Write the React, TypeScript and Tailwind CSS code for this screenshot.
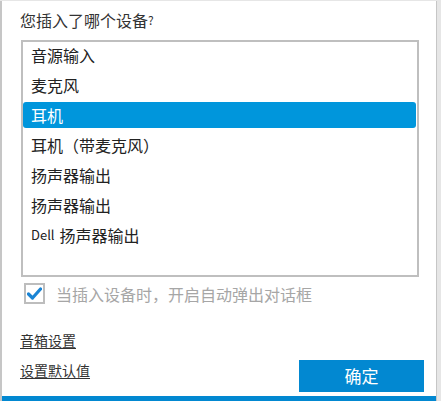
const devices = [
  "音源输入",
  "麦克风",
  "耳机",
  "耳机（带麦克风）",
  "扬声器输出",
  "扬声器输出",
  "Dell 扬声器输出",
];

export default function App() {
  const selected = 2;

  return (
    <div
      className="flex h-[401px] w-[441px] bg-[#e6e6e6] pt-[1px]"
      style={{ fontFamily: '"Microsoft YaHei", "Noto Sans CJK SC", "Noto Sans", sans-serif' }}
    >
      <div className="w-[2px] bg-[#c6c6c6]" />
      <div className="relative flex h-[400px] w-[435px] flex-col border-r border-[#c6c6c6] bg-white">
        <div className="mt-[9px] flex h-[20px] items-center pl-[18px] text-[16px] leading-[20px] text-[#333333]">
          您插入了哪个设备<span className="text-[12px] leading-none">?</span>
        </div>

        <div className="ml-[19px] mt-[10px] flex h-[237px] w-[398px] flex-col gap-[4px] overflow-hidden border-2 border-[#bfbfbf] pr-[1px]">
          {devices.map((name, i) => (
            <div
              key={i}
              className={
                i === selected
                  ? "flex h-[26px] shrink-0 items-center rounded-[3px] bg-[#0096dc] pl-[8px] text-[16px] leading-[20px] text-white"
                  : "flex h-[26px] shrink-0 items-center pl-[8px] text-[16px] leading-[20px] text-[#222222]"
              }
            >
              {name.startsWith("Dell") ? (
                <>
                  <span className="mr-[5px] text-[13px]">Dell</span>
                  {name.slice(5)}
                </>
              ) : (
                name
              )}
            </div>
          ))}
        </div>

        <div className="ml-[22px] mt-[6px] flex items-center gap-[11px]">
          <div className="flex h-[21px] w-[21px] items-center justify-center border-2 border-[#bdbdbd] bg-white">
            <svg width="15" height="13" viewBox="0 0 15 13">
              <path d="M1.5 7 L5.5 11 L13.5 2" fill="none" stroke="#1a84d4" strokeWidth="3.2" strokeLinecap="round" strokeLinejoin="round" />
            </svg>
          </div>
          <span className="text-[16px] leading-[20px] text-[#a6a6a6]">当插入设备时，开启自动弹出对话框</span>
        </div>

        <div className="mt-auto flex items-end justify-between pb-[4px] pl-[18px] pr-[12px]">
          <div className="flex flex-col gap-[10px] pb-[12px]">
            <a className="text-[14px] leading-[20px] text-[#333333] underline underline-offset-2">音箱设置</a>
            <a className="text-[14px] leading-[20px] text-[#333333] underline underline-offset-2">设置默认值</a>
          </div>
          <button className="flex h-[32px] w-[125px] items-center justify-center bg-[#0288d1] text-[17px] text-white">
            确定
          </button>
        </div>

        <div className="h-[5px] w-full bg-[#0288d1]" />
      </div>
    </div>
  );
}
